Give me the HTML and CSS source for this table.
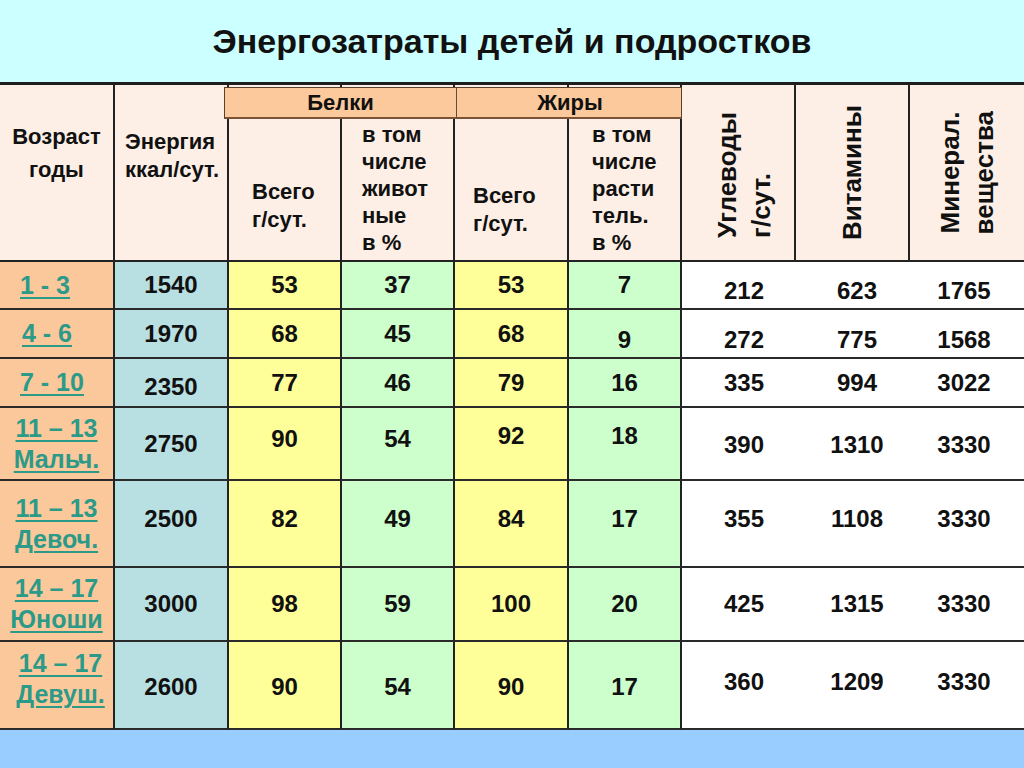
FILE: index.html
```html
<!DOCTYPE html>
<html lang="ru">
<head>
<meta charset="utf-8">
<title>Энергозатраты детей и подростков</title>
<link rel="stylesheet" href="styles.css">
</head>
<body>
<div class="slide">
  <header class="title-band"><h1 class="title">Энергозатраты детей и подростков</h1></header>
  <div class="table">
    <div class="th th-age">Возраст<br>годы</div>
    <div class="th th-energy">Энергия<br>ккал/сут.</div>
    <div class="th th-total th-b">Всего<br>г/сут.</div>
    <div class="th th-share th-b2">в том<br>числе<br>живот<br>ные<br>в %</div>
    <div class="th th-total th-f">Всего<br>г/сут.</div>
    <div class="th th-share th-f2">в том<br>числе<br>расти<br>тель.<br>в %</div>
    <div class="th th-rot th-carb"><span class="rot">Углеводы<br>г/сут.</span></div>
    <div class="th th-rot"><span class="rot rot-c">Витамины</span></div>
    <div class="th th-rot th-last"><span class="rot rot-c">Минерал.<br>вещества</span></div>
    <div class="band">
      <div class="band-cell">Белки</div>
      <div class="band-cell">Жиры</div>
    </div>

    <div class="td age age-l"><a href="#">1 - 3</a></div>
    <div class="td en">1540</div>
    <div class="td y">53</div>
    <div class="td g">37</div>
    <div class="td y">53</div>
    <div class="td g">7</div>
    <div class="td w w1 dn12">212</div>
    <div class="td w w2 dn12">623</div>
    <div class="td w w3 dn12">1765</div>

    <div class="td age age-l age-l2"><a href="#">4 - 6</a></div>
    <div class="td en">1970</div>
    <div class="td y">68</div>
    <div class="td g">45</div>
    <div class="td y">68</div>
    <div class="td g dn12">9</div>
    <div class="td w w1 dn12">272</div>
    <div class="td w w2 dn12">775</div>
    <div class="td w w3 dn12">1568</div>

    <div class="td age age-l"><a href="#">7 - 10</a></div>
    <div class="td en dn9">2350</div>
    <div class="td y">77</div>
    <div class="td g">46</div>
    <div class="td y">79</div>
    <div class="td g">16</div>
    <div class="td w w1">335</div>
    <div class="td w w2">994</div>
    <div class="td w w3">3022</div>

    <div class="td age"><a href="#">11 – 13<br>Мальч.</a></div>
    <div class="td en">2750</div>
    <div class="td y up9">90</div>
    <div class="td g up9">54</div>
    <div class="td y up15">92</div>
    <div class="td g up15">18</div>
    <div class="td w w1 dn3">390</div>
    <div class="td w w2 dn3">1310</div>
    <div class="td w w3 dn3">3330</div>

    <div class="td age"><a href="#">11 – 13<br>Девоч.</a></div>
    <div class="td en up9">2500</div>
    <div class="td y up9">82</div>
    <div class="td g up9">49</div>
    <div class="td y up9">84</div>
    <div class="td g up9">17</div>
    <div class="td w w1 up9">355</div>
    <div class="td w w2 up9">1108</div>
    <div class="td w w3 up9">3330</div>

    <div class="td age"><a href="#">14 – 17<br>Юноши</a></div>
    <div class="td en">3000</div>
    <div class="td y">98</div>
    <div class="td g">59</div>
    <div class="td y">100</div>
    <div class="td g">20</div>
    <div class="td w w1">425</div>
    <div class="td w w2">1315</div>
    <div class="td w w3">3330</div>

    <div class="td age age-r up12"><a href="#">14 – 17<br>Девуш.</a></div>
    <div class="td en dn3">2600</div>
    <div class="td y dn3">90</div>
    <div class="td g dn3">54</div>
    <div class="td y dn3">90</div>
    <div class="td g dn3">17</div>
    <div class="td w w1 up6">360</div>
    <div class="td w w2 up6">1209</div>
    <div class="td w w3 up6">3330</div>
  </div>
  <footer class="foot-band"></footer>
</div>
</body>
</html>
```

FILE: styles.css
```css
* { box-sizing: border-box; }

html, body {
  margin: 0;
  padding: 0;
}

body {
  width: 1024px;
  height: 768px;
  overflow: hidden;
  font-family: "Liberation Sans", Arial, sans-serif;
  font-weight: bold;
  color: #111;
  background: #ccffff;
}

.slide {
  display: flex;
  flex-direction: column;
  width: 1024px;
  height: 768px;
}

.title-band {
  height: 82px;
  background: #ccffff;
  display: flex;
  align-items: center;
  justify-content: center;
}

.title {
  margin: 0;
  font-size: 34px;
  font-weight: bold;
  color: #111;
  letter-spacing: 0;
}

.table {
  position: relative;
  display: grid;
  grid-template-columns: 115px 114px 113px 113px 114px 113px 114px 114px 114px;
  grid-template-rows: 177px 48px 49px 49px 73px 87px 74px 88px;
  border-top: 3px solid #1e1e1e;
  background: #fff;
}

/* header */
.th {
  background: #fdefe5;
  border-right: 2px solid #222;
  border-bottom: 2px solid #222;
  font-size: 22px;
  color: #111;
  white-space: nowrap;
}

.th-age {
  text-align: center;
  line-height: 33px;
  padding-top: 35px;
}

.th-energy {
  line-height: 28px;
  padding-top: 43px;
  padding-left: 10px;
}

.th-total {
  line-height: 28px;
}

.th-b { padding: 93px 0 0 23px; }
.th-f { padding: 97px 0 0 18px; }

.th-share {
  line-height: 27px;
  padding-top: 36px;
}

.th-b2 { padding-left: 20px; }
.th-f2 { padding-left: 23px; }

.th-rot {
  display: flex;
  align-items: center;
  justify-content: center;
}

.th-carb {
  padding-left: 11px;
  padding-top: 5px;
}

.th-last { border-right: none; }

.rot {
  writing-mode: vertical-rl;
  transform: rotate(180deg);
  font-size: 26px;
  line-height: 34px;
  text-align: start;
  white-space: nowrap;
}

.rot-c { text-align: center; }

.band {
  position: absolute;
  top: 2px;
  left: 224px;
  width: 458px;
  height: 32px;
  display: grid;
  grid-template-columns: 231px 227px;
  background: #fbc99b;
  border: 1px solid #5a3f2c;
  border-bottom: 2px solid #7a5236;
}

.band-cell {
  display: flex;
  align-items: center;
  justify-content: center;
  font-size: 22px;
  color: #111;
}

.band-cell + .band-cell {
  border-left: 1px solid #6b4a33;
}

/* body cells */
.td {
  display: flex;
  align-items: center;
  justify-content: center;
  border-right: 2px solid #222;
  border-bottom: 2px solid #2a2a2a;
  font-size: 24px;
  color: #111;
}

.age {
  background: #fbc89b;
  font-size: 25px;
  line-height: 31px;
  text-align: center;
}

.age-l {
  justify-content: flex-start;
  padding-left: 20px;
}

.age-l2 { padding-left: 22px; }

.age-r { padding-left: 8px; }

.age a {
  color: #2b9a88;
  text-decoration: underline;
  text-decoration-thickness: 2px;
  text-underline-offset: 3px;
}

.en { background: #b8dfe1; }
.y { background: #ffff99; }
.g { background: #ccffcc; }

.w {
  background: #fff;
  border-right: none;
}

.w1 { padding-left: 10px; }
.w2 { padding-left: 8px; }
.w3 { padding-right: 6px; }

/* vertical nudges matching the slide */
.dn12 { padding-top: 12px; }
.dn9 { padding-top: 9px; }
.dn3 { padding-top: 3px; }
.up6 { padding-bottom: 6px; }
.up9 { padding-bottom: 9px; }
.up12 { padding-bottom: 12px; }
.up15 { padding-bottom: 15px; }

.foot-band {
  flex: 1;
  background: #99ccff;
}
```
